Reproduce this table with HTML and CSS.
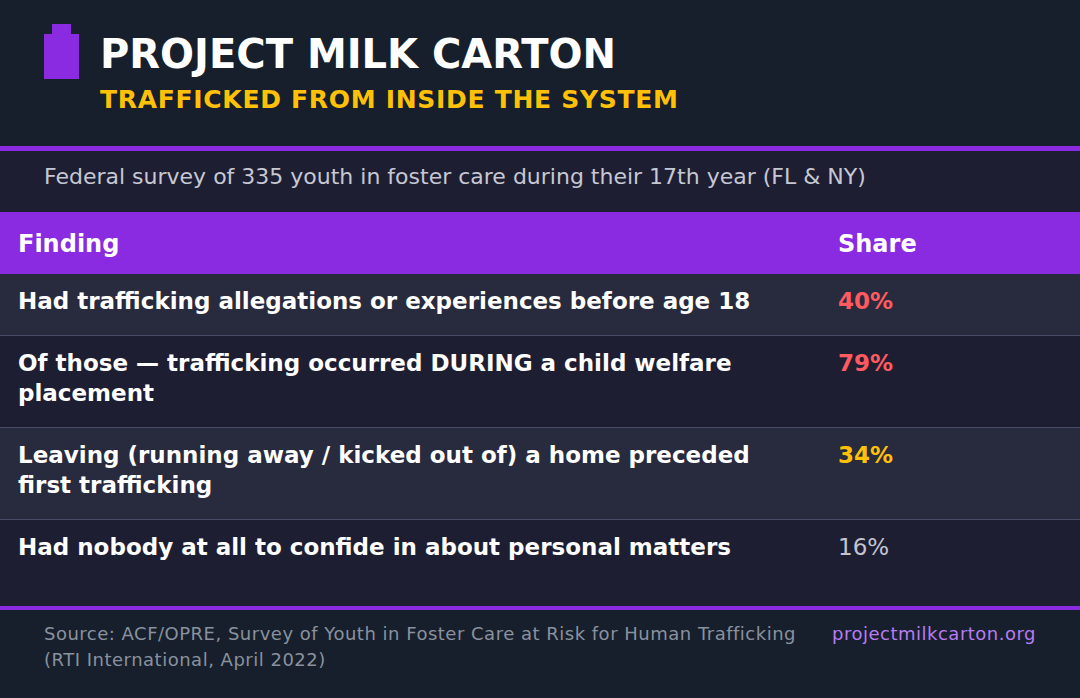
FILE: index.html
```html
<!DOCTYPE html>
<html lang="en">
<head>
<meta charset="utf-8">
<title>Project Milk Carton</title>
<link rel="stylesheet" href="styles.css">
</head>
<body>
<div class="page">
  <header class="masthead">
    <svg class="logo" width="35" height="55" viewBox="0 0 35 55" aria-hidden="true">
      <rect x="8" y="0" width="19" height="11" fill="#8a2be2"/>
      <rect x="0" y="10" width="35" height="45" fill="#8a2be2"/>
    </svg>
    <div class="titles">
      <h1 class="title">PROJECT MILK CARTON</h1>
      <div class="subtitle">TRAFFICKED FROM INSIDE THE SYSTEM</div>
    </div>
  </header>
  <div class="intro">Federal survey of 335 youth in foster care during their 17th year (FL &amp; NY)</div>
  <div class="table">
    <div class="row head">
      <div class="cell finding">Finding</div>
      <div class="cell share">Share</div>
    </div>
    <div class="row alt">
      <div class="cell finding">Had trafficking allegations or experiences before age 18</div>
      <div class="cell share red">40%</div>
    </div>
    <div class="row">
      <div class="cell finding">Of those — trafficking occurred DURING a child welfare placement</div>
      <div class="cell share red">79%</div>
    </div>
    <div class="row alt">
      <div class="cell finding">Leaving (running away / kicked out of) a home preceded first trafficking</div>
      <div class="cell share yellow">34%</div>
    </div>
    <div class="row last">
      <div class="cell finding">Had nobody at all to confide in about personal matters</div>
      <div class="cell share plain">16%</div>
    </div>
  </div>
  <footer class="foot">
    <div class="source">Source: ACF/OPRE, Survey of Youth in Foster Care at Risk for Human Trafficking<br>(RTI International, April 2022)</div>
    <div class="link">projectmilkcarton.org</div>
  </footer>
</div>
</body>
</html>
```

FILE: styles.css
```css
* { box-sizing: border-box; }

html, body {
  margin: 0;
  padding: 0;
  background: #1e1e32;
}

body {
  font-family: "DejaVu Sans", Verdana, sans-serif;
  color: #ffffff;
}

.page {
  width: 1080px;
  height: 698px;
  display: flex;
  flex-direction: column;
  overflow: hidden;
}

.masthead {
  height: 151px;
  flex: none;
  background: #161f2b;
  border-bottom: 5px solid #8a2be2;
  padding: 24px 44px 0 44px;
  display: flex;
  align-items: flex-start;
  gap: 21px;
}

.logo {
  display: block;
  flex: none;
}

.titles {
  padding-top: 6px;
}

.title {
  margin: 0;
  font-size: 40px;
  line-height: 48px;
  font-weight: bold;
  color: #ffffff;
}

.subtitle {
  margin-top: 7px;
  font-size: 25px;
  line-height: 30px;
  font-weight: bold;
  letter-spacing: 0.7px;
  color: #ffc107;
}

.intro {
  flex: none;
  background: #1e1e32;
  padding: 11px 44px 20px;
  font-size: 22px;
  line-height: 30px;
  color: #c6c8d3;
}

.table {
  flex: 1;
  display: flex;
  flex-direction: column;
}

.row {
  display: grid;
  grid-template-columns: 820px 1fr;
  background: #1e1e32;
  border-bottom: 1px solid #484a66;
  font-size: 23px;
  line-height: 30px;
  font-weight: bold;
}

.row.alt {
  background: #282a3d;
}

.row.head {
  background: #8a2be2;
  border-bottom: none;
  font-size: 24px;
}

.row.head .cell {
  padding: 17px 18px 15px;
}

.row.last {
  flex: 1;
  border-bottom: none;
}

.cell {
  padding: 12px 18px 19px;
}

.red { color: #ff5a5f; }
.yellow { color: #ffc107; }
.plain { color: #c3c5cf; font-weight: normal; }

.foot {
  flex: none;
  height: 92px;
  background: #161f2b;
  border-top: 4px solid #8a2be2;
  padding: 11px 44px 0;
  display: flex;
  justify-content: space-between;
  gap: 24px;
  font-size: 18px;
  line-height: 26px;
  letter-spacing: 0.5px;
}

.source {
  color: #8a919f;
}

.link {
  flex: none;
  color: #b87cf3;
}
```
